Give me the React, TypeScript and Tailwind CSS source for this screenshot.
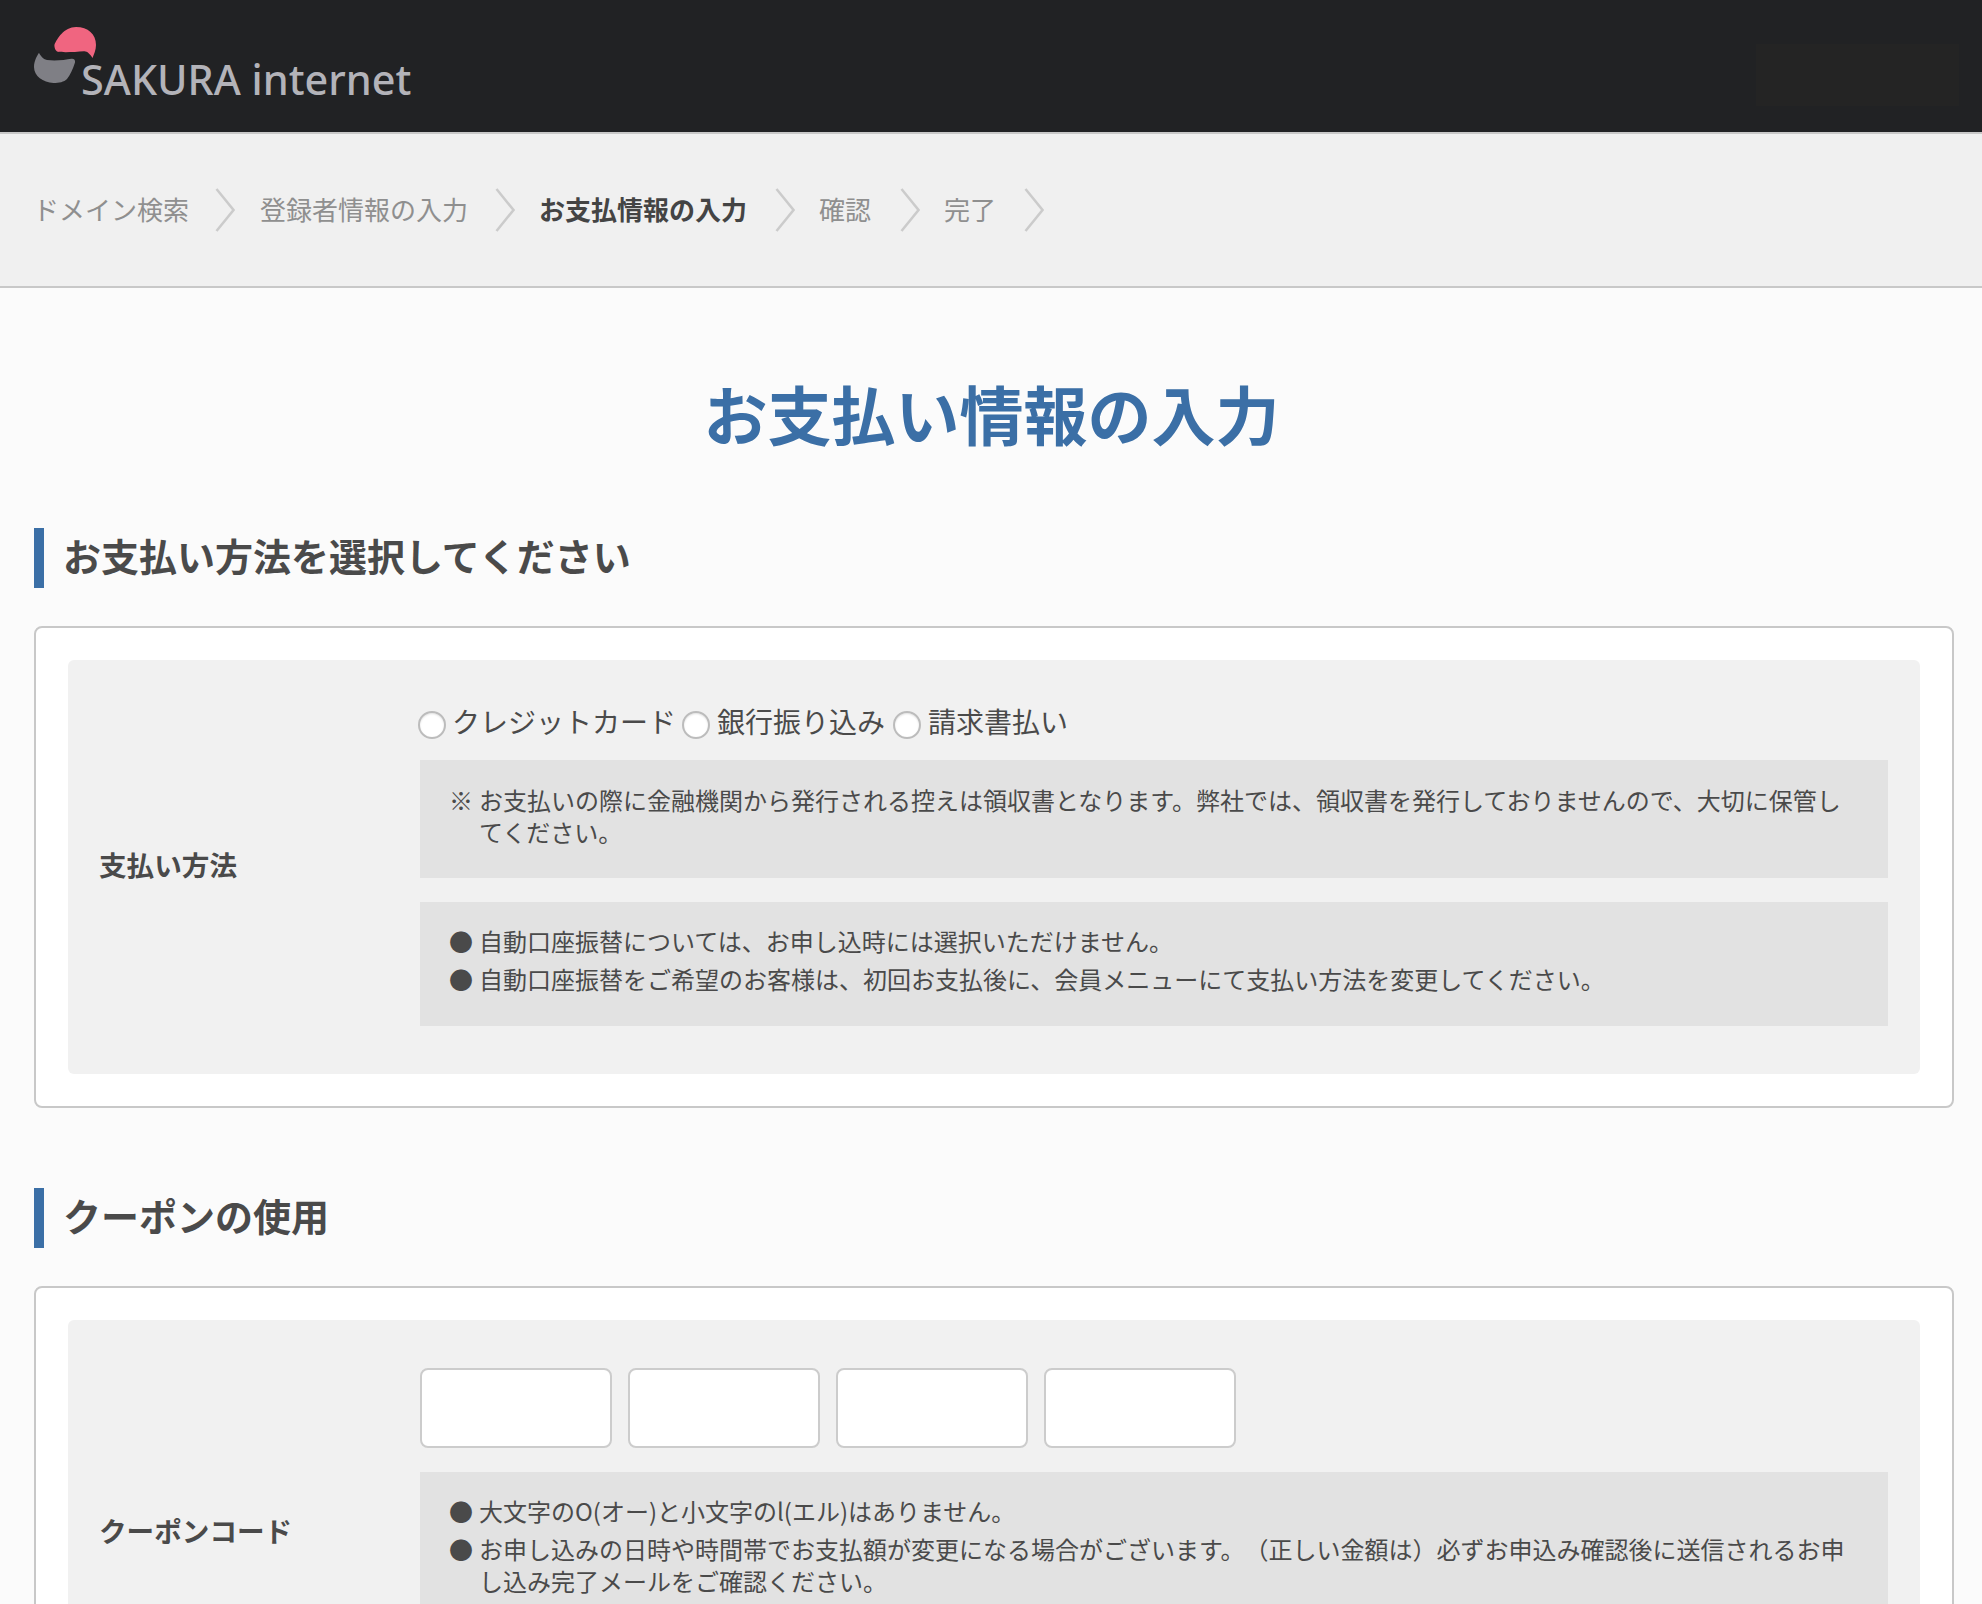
const jp = "font-['Noto_Sans_CJK_JP','Noto_Sans',sans-serif]";

const steps = [
  { label: "ドメイン検索", w: "w-[153px]" },
  { label: "登録者情報の入力", w: "w-[206px]" },
  { label: "お支払情報の入力", w: "w-[207px]", active: true },
  { label: "確認", w: "w-[52px]" },
  { label: "完了", w: "w-[51px]" },
];

function Logo() {
  return (
    <div className="flex items-start pt-[26px]">
      <svg width="64" height="58" viewBox="32 25 64 58" className="shrink-0">
        <path
          d="M54.5 43.5C57 38 64 26 76 26C88 26 96 33 96 44C96 49 94 53 92.5 57C90 53 87 50 84 50.3C75 51.2 62 51.5 58 50.8C55.5 50.3 54 46 54.5 43.5Z"
          fill="#f06580"
        />
        <path
          d="M39 51.8C40 54 43 58.5 47 59C55 60 65 59 71.5 57.8C74 57.5 75.5 59 75 61.5C73 68 70 74 67 78C64 81 59 82 53.5 82C43 81.5 34 75 34 66C34 60 37 55 39 51.8Z"
          fill="#7f7f85"
        />
      </svg>
      <span className="ml-[-15px] mt-[29px] font-['Noto_Sans',sans-serif] text-[41.4px] leading-[48px] font-medium text-[#b3b3b9]">
        SAKURA internet
      </span>
    </div>
  );
}

function Chevron() {
  return (
    <svg width="20" height="44" viewBox="0 0 20 44" className="shrink-0">
      <path d="M1.5 1L18.5 22L1.5 43" fill="none" stroke="#cbcbcb" strokeWidth="2.5" />
    </svg>
  );
}

function Note({ className = "", children }: { className?: string; children: React.ReactNode }) {
  return (
    <div className={`bg-[#e2e2e2] pr-[30px] pl-[29px] text-[24px] [text-spacing-trim:space-all] text-[#4a4a4a] ${className}`}>
      {children}
    </div>
  );
}

function Item({ mark = "●", children }: { mark?: string; children: React.ReactNode }) {
  return (
    <div className="flex">
      <span className="w-[30px] shrink-0">{mark}</span>
      <span>{children}</span>
    </div>
  );
}

function Radio({ label, className = "" }: { label: string; className?: string }) {
  return (
    <label className={`flex items-center ${className}`}>
      <input
        type="radio"
        name="pay"
        className="mt-[5px] ml-[-2px] mr-[6px] h-[28px] w-[28px] appearance-none rounded-full border-2 border-[#bcbcbc] bg-white shadow-[inset_0_1px_2px_rgba(0,0,0,0.12)]"
      />
      <span className="mb-[3px] text-[28px] leading-[40px] text-[#4a4a4a]">{label}</span>
    </label>
  );
}

function Section({ title, children }: { title: string; children: React.ReactNode }) {
  return (
    <section>
      <h2 className="h-[60px] border-l-[10px] border-[#3b6fa6] pl-[19px] text-[38px] leading-[54px] font-bold text-[#4a4a4a]">
        {title}
      </h2>
      <div className="mt-[38px] rounded-[8px] border-2 border-[#c8c8c8] bg-white p-[32px]">{children}</div>
    </section>
  );
}

export default function App() {
  return (
    <div className={`h-[1604px] overflow-hidden bg-[#fbfbfb] ${jp}`}>
      <header className="flex h-[134px] items-start justify-between border-b-2 border-[#c8c8c8] bg-[#212224] pr-[23px] pl-[32px]">
        <Logo />
        <div className="mt-[44px] h-[62px] w-[203px] bg-[#242424]" />
      </header>

      <nav className="flex h-[154px] items-center border-b-2 border-[#c8c8c8] bg-[#f0f0f0] pb-[2px] pl-[33px]">
        {steps.map((s, i) => (
          <div key={s.label} className={`flex items-center ${i === 0 ? "" : "ml-[1px] -mr-[1px]"}`}>
            <span
              className={`${s.w} text-[26px] leading-[40px] whitespace-nowrap ${
                s.active ? "font-bold text-[#444444]" : "text-[#8f8f8f]"
              }`}
            >
              {s.label}
            </span>
            <span className="mt-[2px] mr-[24px] ml-[29px]">
              <Chevron />
            </span>
          </div>
        ))}
      </nav>

      <main className="pr-[28px] pl-[34px]">
        <h1 className="mt-[92px] mr-[5px] mb-[84px] text-center text-[64px] leading-[64px] font-bold text-[#3b6fa6]">
          お支払い情報の入力
        </h1>

        <div className="flex flex-col gap-[80px]">
          <Section title="お支払い方法を選択してください">
            <div className="flex items-center rounded-[6px] bg-[#f1f1f1] pt-[47px] pr-[32px] pb-[48px] pl-[31px]">
              <div className="mb-[5px] w-[321px] shrink-0 text-[27.6px] leading-[40px] font-bold text-[#4a4a4a]">支払い方法</div>
              <div className="min-w-0 flex-1">
                <div className="flex h-[30px] items-center gap-[8px]">
                  <Radio label="クレジットカード" />
                  <Radio label="銀行振り込み" className="mr-[-1px] [&>span]:ml-[1px]" />
                  <Radio label="請求書払い" className="ml-[3px] [&>span]:ml-[1px]" />
                </div>
                <Note className="mt-[23px] pt-[24px] pb-[30px] leading-[32px]">
                  <Item mark="※">
                    お支払いの際に金融機関から発行される控えは領収書となります。弊社では、領収書を発行しておりませんので、大切に保管してください。
                  </Item>
                </Note>
                <Note className="mt-[24px] pt-[20px] pb-[28px] leading-[38px]">
                  <Item>自動口座振替については、お申し込時には選択いただけません。</Item>
                  <Item>自動口座振替をご希望のお客様は、初回お支払後に、会員メニューにて支払い方法を変更してください。</Item>
                </Note>
              </div>
            </div>
          </Section>

          <Section title="クーポンの使用">
            <div className="flex items-center rounded-[6px] bg-[#f1f1f1] py-[48px] pr-[32px] pl-[31px]">
              <div className="mb-[5px] w-[321px] shrink-0 text-[27.6px] leading-[40px] font-bold text-[#4a4a4a]">クーポンコード</div>
              <div className="min-w-0 flex-1">
                <div className="flex gap-[16px]">
                  <input className="h-[80px] w-[192px] rounded-[8px] border-2 border-[#cccccc] bg-white" />
                  <input className="h-[80px] w-[192px] rounded-[8px] border-2 border-[#cccccc] bg-white" />
                  <input className="h-[80px] w-[192px] rounded-[8px] border-2 border-[#cccccc] bg-white" />
                  <input className="h-[80px] w-[192px] rounded-[8px] border-2 border-[#cccccc] bg-white" />
                </div>
                <Note className="mt-[24px] h-[224px] pt-[20px]">
                  <div className="leading-[38px]">
                    <Item>大文字のO(オー)と小文字のl(エル)はありません。</Item>
                  </div>
                  <div className="pt-[3px] leading-[32px]">
                    <Item>
                      お申し込みの日時や時間帯でお支払額が変更になる場合がございます。（正しい金額は）必ずお申込み確認後に送信されるお申し込み完了メールをご確認ください。
                    </Item>
                  </div>
                </Note>
              </div>
            </div>
          </Section>
        </div>
      </main>
    </div>
  );
}
